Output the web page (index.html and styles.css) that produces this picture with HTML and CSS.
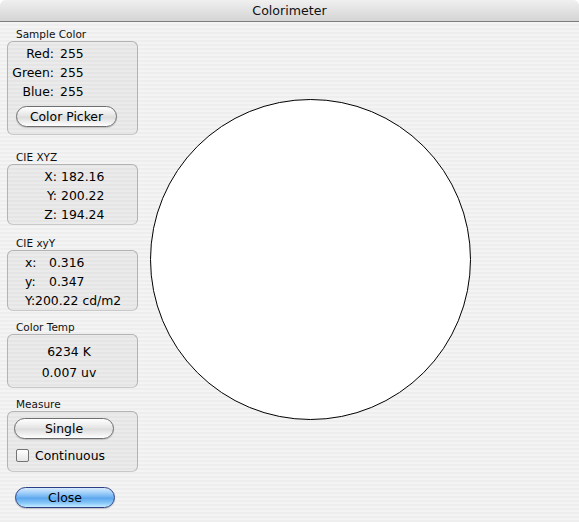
FILE: index.html
```html
<!DOCTYPE html>
<html>
<head>
<meta charset="utf-8">
<title>Colorimeter</title>
<link rel="stylesheet" href="styles.css">
</head>
<body>
<div class="window">
  <div class="titlebar">Colorimeter</div>
  <div class="content">
    <div class="sidebar">
      <section class="group g-sample">
        <div class="group-label">Sample Color</div>
        <div class="box box-sample">
          <div class="kv kv-rgb">
            <span class="k">Red:</span><span class="v">255</span>
            <span class="k">Green:</span><span class="v">255</span>
            <span class="k">Blue:</span><span class="v">255</span>
          </div>
          <button class="btn btn-picker">Color Picker</button>
        </div>
      </section>
      <section class="group g-xyz">
        <div class="group-label">CIE XYZ</div>
        <div class="box box-rows">
          <div class="kv kv-xyz">
            <span class="k">X:</span><span class="v">182.16</span>
            <span class="k">Y:</span><span class="v">200.22</span>
            <span class="k">Z:</span><span class="v">194.24</span>
          </div>
        </div>
      </section>
      <section class="group g-xyy">
        <div class="group-label">CIE xyY</div>
        <div class="box box-rows">
          <div class="kv kv-xyy">
            <span class="k">x:</span><span class="v">0.316</span>
            <span class="k">y:</span><span class="v">0.347</span>
            <span class="full">Y:200.22 cd/m2</span>
          </div>
        </div>
      </section>
      <section class="group g-temp">
        <div class="group-label">Color Temp</div>
        <div class="box box-temp">
          <div class="temp-line">6234 K</div>
          <div class="temp-line">0.007 uv</div>
        </div>
      </section>
      <section class="group g-measure">
        <div class="group-label">Measure</div>
        <div class="box box-measure">
          <button class="btn btn-single">Single</button>
          <label class="check-row"><span class="checkbox"></span><span>Continuous</span></label>
        </div>
      </section>
      <button class="btn btn-default btn-close">Close</button>
    </div>
    <div class="canvas">
      <div class="circle"></div>
    </div>
  </div>
</div>
</body>
</html>
```

FILE: styles.css
```css
* { box-sizing: border-box; }
html, body {
  margin: 0;
  padding: 0;
  width: 579px;
  height: 522px;
  overflow: hidden;
  background: #ffffff;
}
body {
  font-family: "DejaVu Sans", "Liberation Sans", sans-serif;
  font-size: 12.4px;
  color: #000;
}
.window {
  width: 579px;
  height: 522px;
  background: repeating-linear-gradient(to bottom, #eeeeee 0px, #eeeeee 2px, #f4f4f4 2px, #f4f4f4 4px);
  border-radius: 6px 6px 0 0;
  overflow: hidden;
}
.titlebar {
  height: 22px;
  line-height: 21px;
  text-align: center;
  font-size: 12.6px;
  color: #111;
  background: linear-gradient(to bottom, #f0f0f0 0%, #e2e2e2 50%, #d4d4d4 100%);
  border-bottom: 1px solid #7d7d7d;
}
.content {
  display: flex;
  align-items: flex-start;
}
.sidebar {
  width: 138px;
  padding: 5px 0 0 7px;
  display: flex;
  flex-direction: column;
  align-items: flex-start;
}
.group { width: 131px; }
.group-label {
  height: 14px;
  line-height: 14px;
  font-size: 10.5px;
  padding-left: 9px;
  color: #111;
}
.box {
  width: 131px;
  border: 1px solid #b3b3b3;
  border-bottom-color: #c9c9c9;
  border-radius: 6px;
  background: rgba(0, 0, 0, 0.035);
}
.g-xyz { margin-top: 15px; }
.g-xyy { margin-top: 11px; }
.g-temp { margin-top: 9px; }
.g-measure { margin-top: 9px; }

.box-sample { padding: 2px 0 7px 0; }
.box-rows { padding: 2px 0 0 0; }
.box-temp { padding: 6px 7px 4px 0; text-align: center; }
.box-measure { padding: 6px 0 9px 0; }

.kv {
  display: grid;
  line-height: 19px;
}
.kv-rgb { grid-template-columns: 46px auto; column-gap: 6px; }
.kv-xyz { grid-template-columns: 49px auto; column-gap: 4px; }
.kv-rgb .k, .kv-xyz .k { text-align: right; }
.kv-xyy { grid-template-columns: 24px auto; padding-left: 17px; }
.kv-xyy .full { grid-column: 1 / span 2; }

.temp-line { line-height: 21px; }

.btn {
  display: block;
  height: 21px;
  padding: 0;
  font-family: inherit;
  font-size: 12.4px;
  line-height: 19px;
  color: #000;
  text-align: center;
  border: 1px solid #6f6f6f;
  border-radius: 11px;
  background: linear-gradient(to bottom, #ffffff 0%, #f4f4f4 20%, #e4e4e4 48%, #dcdcdc 52%, #ececec 75%, #ffffff 100%);
  box-shadow: 0 1px 1px rgba(0, 0, 0, 0.18);
}
.btn-picker { width: 101px; margin: 5px 0 0 8px; }
.btn-single { width: 100px; margin: 0 0 0 6px; }
.btn-close { width: 100px; margin: 15px 0 0 8px; }
.btn-default {
  border-color: #2e3f87;
  background: linear-gradient(to bottom, #d8ecfd 0%, #a8d3fa 22%, #6fb3f2 48%, #5aa5ee 52%, #86c6f8 78%, #c4ecff 100%);
}

.check-row {
  display: flex;
  align-items: center;
  margin: 10px 0 0 8px;
  height: 13px;
}
.checkbox {
  width: 13px;
  height: 13px;
  border: 1px solid #737373;
  border-radius: 2px;
  background: linear-gradient(to bottom, #ffffff, #e6e6e6);
  margin-right: 6px;
  flex: none;
}

.canvas { flex: 1; }
.circle {
  width: 321px;
  height: 321px;
  margin: 77px 0 0 12px;
  border: 1px solid #000;
  border-radius: 50%;
  background: #fff;
}
```
